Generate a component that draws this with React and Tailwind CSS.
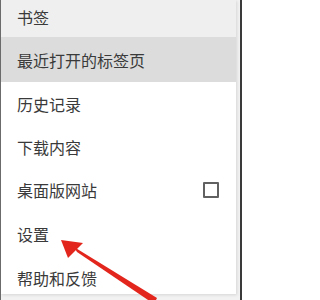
import React from 'react';

const rows = [
  { label: '书签', cls: 'h-[37px] pb-[4px] bg-[#efefef]' },
  { label: '最近打开的标签页', cls: 'h-[45px] bg-[#dcdcdc]' },
  { label: '历史记录', cls: 'h-[43px]' },
  { label: '下载内容', cls: 'h-[43px]' },
  { label: '桌面版网站', cls: 'h-[44px]', checkbox: true },
  { label: '设置', cls: 'h-[44px]' },
  { label: '帮助和反馈', cls: 'h-[38px] pt-[5px]' },
];

function App() {
  return (
    <div
      className="relative w-[242px] h-[300px] overflow-hidden bg-[#f2f2f2] border-l border-r-2 border-l-[#6b6b6b] border-r-[#3a3a3a]"
      style={{ fontFamily: '"Noto Sans CJK SC", "Noto Sans", sans-serif' }}
    >
      <div className="w-[235px] bg-white shadow-[1px_1px_3px_rgba(0,0,0,0.12)] flex flex-col">
        {rows.map(({ label, cls, checkbox }) => (
          <div key={label} className={`flex items-center justify-between pl-[16px] pr-[17px] ${cls}`}>
            <span className="text-[16px] leading-[24px] text-[#3a3a3a]">{label}</span>
            {checkbox && <span className="w-[16px] h-[16px] border-2 border-[#616161] rounded-[1px]" />}
          </div>
        ))}
      </div>

      {/* red pointer arrow */}
      <svg className="absolute left-0 top-0 pointer-events-none" width="242" height="300" viewBox="0 0 242 300">
        <polygon points="73,247 76,252 153,304 156,298" fill="#e3261d" />
        <polygon points="60,240 82,243 67,258" fill="#e3261d" />
      </svg>
    </div>
  );
}

export default App;
